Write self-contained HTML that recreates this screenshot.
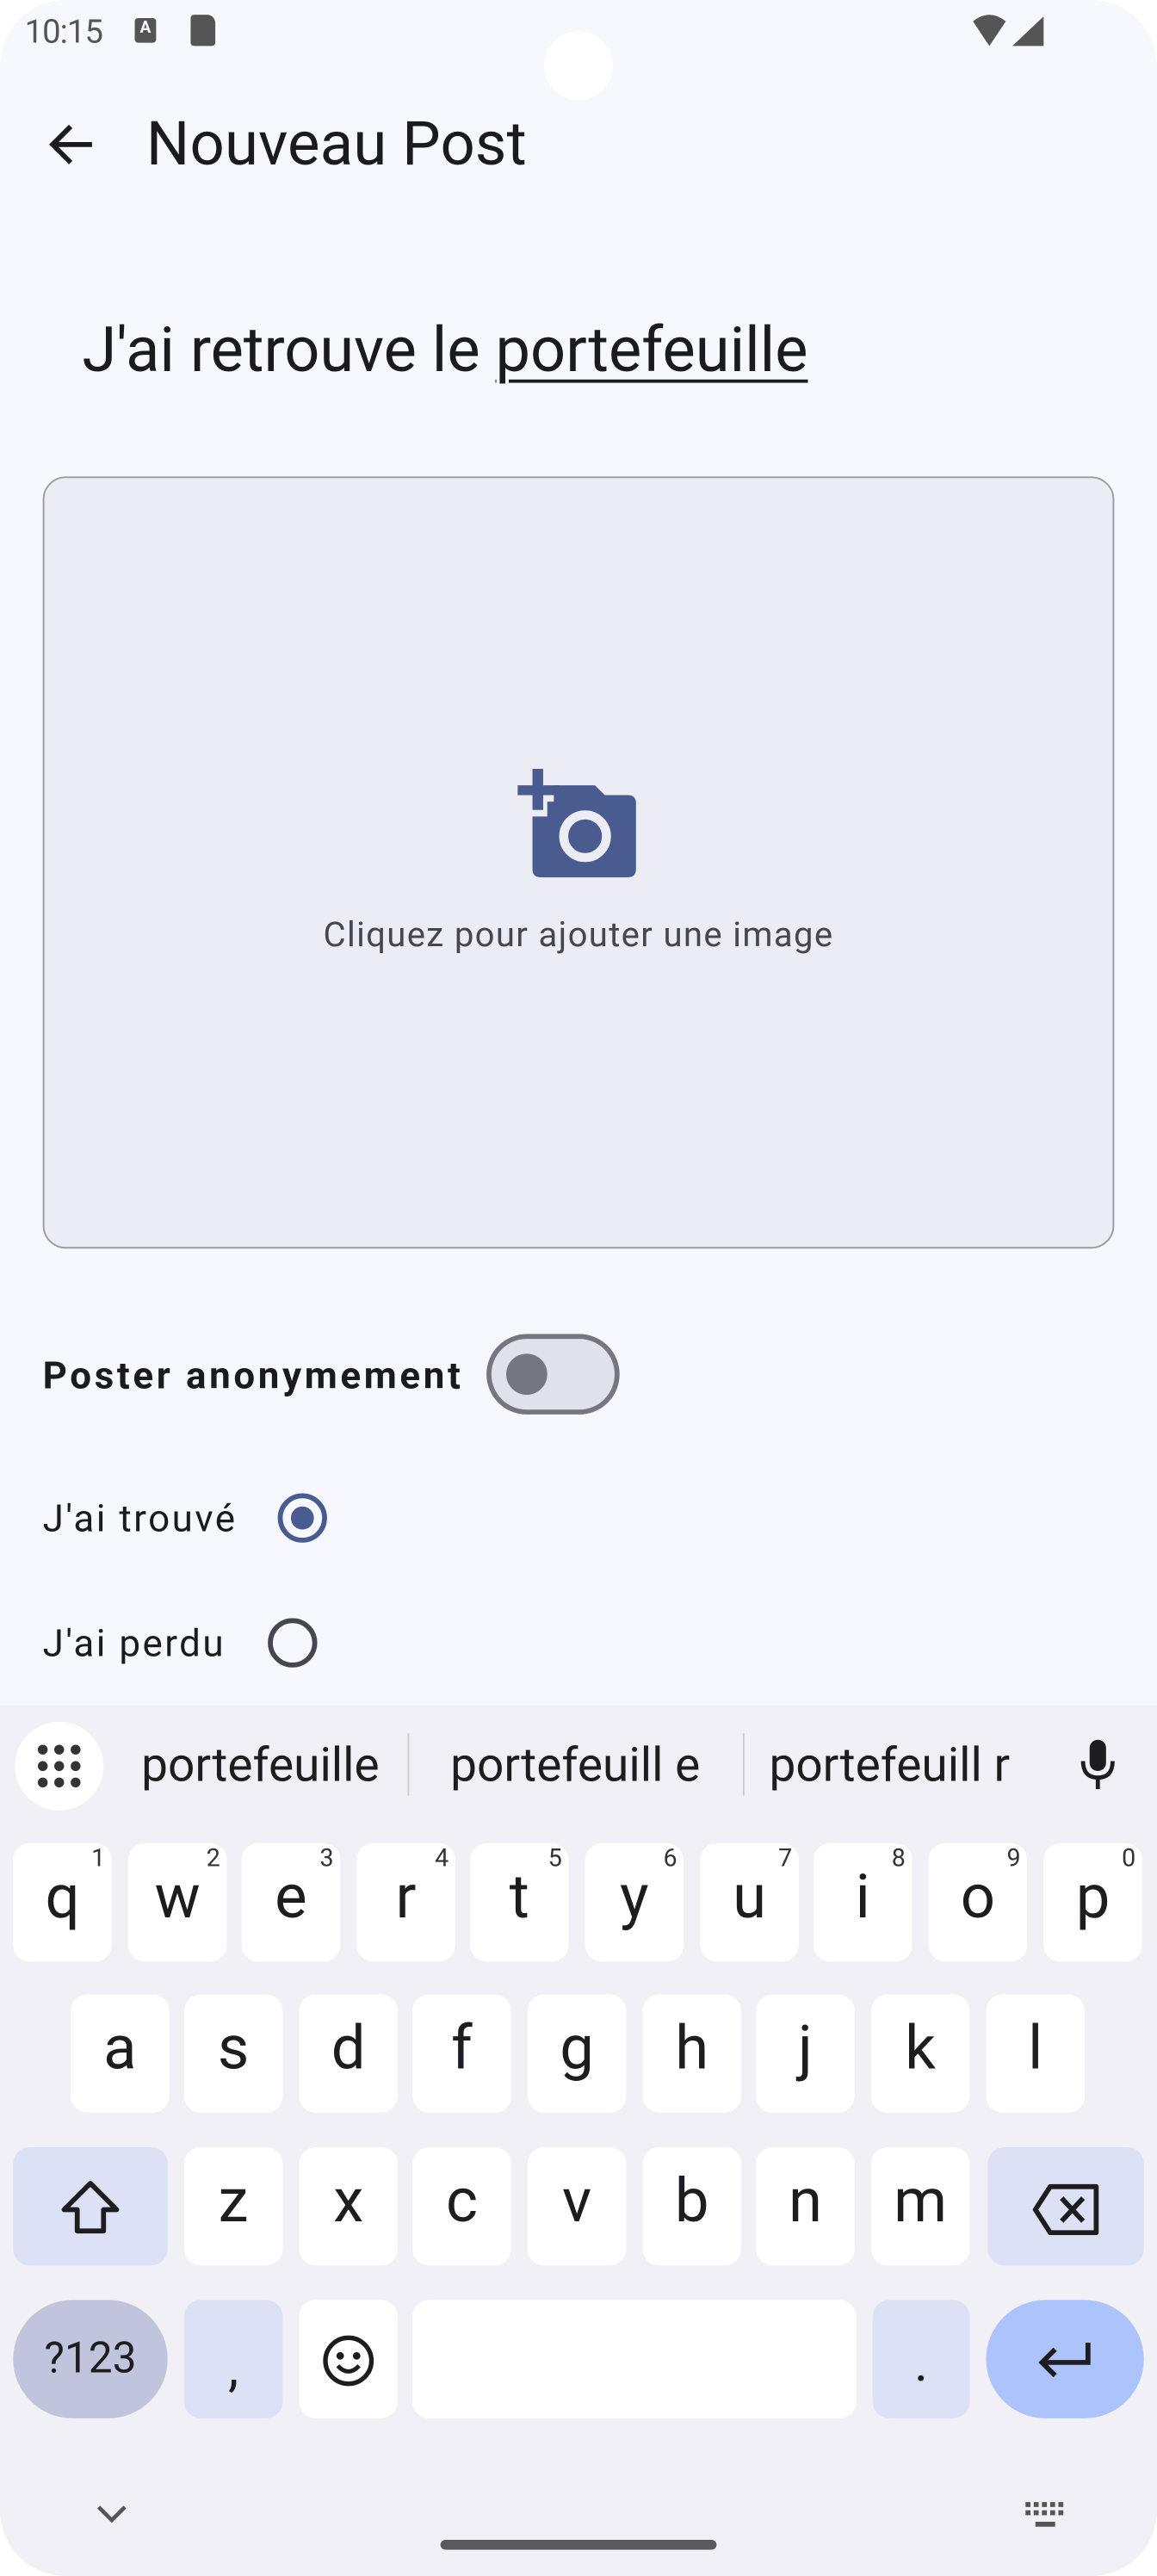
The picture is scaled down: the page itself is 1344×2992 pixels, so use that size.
<!DOCTYPE html>
<html><head><meta charset="utf-8">
<style>
html,body{margin:0;padding:0;background:#fff;}
body{width:1344px;height:2992px;overflow:hidden;}
#w{position:absolute;left:0;top:0;width:704px;height:1568px;transform:scale(1.909091,1.908163);transform-origin:0 0;background:#f7f8fd;border-radius:40px;overflow:hidden;font-family:"Roboto","Liberation Sans",sans-serif;}
.a{position:absolute;white-space:nowrap;}
.kb{position:absolute;left:0;top:1038px;width:704px;height:530px;background:#f1f0f6;}
.k{position:absolute;width:60px;height:72px;background:#fff;border-radius:10px;font-size:37px;color:#1d1d1f;text-align:center;line-height:68px;}
.k sup{position:absolute;right:4px;top:2px;font-size:15px;line-height:15px;color:#333;}
</style></head><body><div id="w">
<div class="a" style="left:15px;top:7px;font-size:20px;color:#555;letter-spacing:-0.5px">10:15</div>
<div class="a" style="left:82px;top:11px;width:13px;height:15px;background:#555;border-radius:2px;color:#fff;font-size:10px;text-align:center;line-height:14px;font-weight:bold">A</div>
<div class="a" style="left:116px;top:9px;width:15px;height:19px;background:#555;border-radius:2px 5px 2px 2px"></div>
<svg class="a" style="left:590px;top:9px" width="48" height="20"><path d="M2 4 Q12 -4 22 4 L12 19Z" fill="#555"/><path d="M26 19 L45 1 L45 19Z" fill="#555"/></svg>
<div class="a" style="left:331px;top:19px;width:42px;height:42px;border-radius:50%;background:#fff"></div>

<svg class="a" style="left:28px;top:74px" width="32" height="28"><path d="M28 14H4M15 3L4 14L15 25" stroke="#1b1b1f" stroke-width="3" fill="none"/></svg>
<div class="a" style="left:89px;top:67px;font-size:37px;color:#1b1b1f;letter-spacing:0.1px">Nouveau Post</div>
<div class="a" style="left:50px;top:192px;font-size:37.8px;color:#1b1b1f">J'ai retrouve le <span style="text-decoration:underline;text-underline-offset:5px;text-decoration-thickness:2px">portefeuille</span></div>

<div class="a" style="left:26px;top:290px;width:650px;height:468px;border:1px solid #9a9ca3;border-radius:14px;background:#ecedf4"></div>
<svg class="a" style="left:310px;top:464px" width="84" height="76" viewBox="310 464 84 76">
<rect x="315" y="478" width="25" height="6" fill="#4a5b8f"/><rect x="324" y="468" width="6.5" height="25" fill="#4a5b8f"/>
<path d="M337 478 H362 L368 484 H382 Q387 484 387 489 V529 Q387 534 382 534 H329 Q324 534 324 529 V497 H333 V488 H337Z" fill="#4a5b8f"/>
<circle cx="356" cy="509" r="13" fill="none" stroke="#ecedf4" stroke-width="5.5"/>
</svg>
<div class="a" style="left:0;width:704px;text-align:center;top:558px;font-size:21px;letter-spacing:0.7px;color:#45464f">Cliquez pour ajouter une image</div>

<div class="a" style="left:26px;top:824px;font-size:23px;letter-spacing:1.9px;font-weight:bold;color:#1b1b1f">Poster anonymement</div>
<div class="a" style="left:296px;top:812px;border:3px solid #74777f;border-radius:26px;background:#e0e2ea;width:75px;height:43px"></div>
<div class="a" style="left:308px;top:824px;width:25px;height:25px;border-radius:50%;background:#74777f"></div>

<div class="a" style="left:26px;top:911px;font-size:23px;letter-spacing:1.3px;color:#1b1b1f">J'ai trouvé</div>
<div class="a" style="left:169px;top:909px;width:24px;height:24px;border:3px solid #4a5b8f;border-radius:50%"></div>
<div class="a" style="left:177px;top:917px;width:14px;height:14px;border-radius:50%;background:#4a5b8f"></div>
<div class="a" style="left:26px;top:987px;font-size:23px;letter-spacing:1.3px;color:#1b1b1f">J'ai perdu</div>
<div class="a" style="left:163px;top:985px;width:24px;height:24px;border:3px solid #45464f;border-radius:50%"></div>

<div class="kb">
<div class="a" style="left:9px;top:10px;width:54px;height:54px;border-radius:50%;background:#fff"></div>
<svg class="a" style="left:22px;top:23px" width="28" height="28"><g fill="#333"><circle cx="4" cy="4" r="3"/><circle cx="14" cy="4" r="3"/><circle cx="24" cy="4" r="3"/><circle cx="4" cy="14" r="3"/><circle cx="14" cy="14" r="3"/><circle cx="24" cy="14" r="3"/><circle cx="4" cy="24" r="3"/><circle cx="14" cy="24" r="3"/><circle cx="24" cy="24" r="3"/></g></svg>
<div class="a" style="left:86px;top:20px;font-size:28.8px;color:#1d1d1f">portefeuille</div>
<div class="a" style="left:248px;top:17px;width:1px;height:38px;background:#ccc"></div>
<div class="a" style="left:274px;top:20px;font-size:28.8px;color:#1d1d1f">portefeuill e</div>
<div class="a" style="left:452px;top:17px;width:1px;height:38px;background:#ccc"></div>
<div class="a" style="left:468px;top:20px;font-size:28.8px;color:#1d1d1f">portefeuill r</div>
<svg class="a" style="left:656px;top:20px" width="24" height="32"><rect x="7" y="1" width="10" height="19" rx="5" fill="#1d1d1f"/><path d="M3 14 Q3 24 12 24 Q21 24 21 14 M12 24V31" stroke="#1d1d1f" stroke-width="2.5" fill="none"/></svg>
</div>

<div class="k" style="left:8px;top:1122px">q<sup>1</sup></div>
<div class="k" style="left:78px;top:1122px">w<sup>2</sup></div>
<div class="k" style="left:147px;top:1122px">e<sup>3</sup></div>
<div class="k" style="left:217px;top:1122px">r<sup>4</sup></div>
<div class="k" style="left:286px;top:1122px">t<sup>5</sup></div>
<div class="k" style="left:356px;top:1122px">y<sup>6</sup></div>
<div class="k" style="left:426px;top:1122px">u<sup>7</sup></div>
<div class="k" style="left:495px;top:1122px">i<sup>8</sup></div>
<div class="k" style="left:565px;top:1122px">o<sup>9</sup></div>
<div class="k" style="left:635px;top:1122px">p<sup>0</sup></div>

<div class="k" style="left:43px;top:1214px">a</div>
<div class="k" style="left:112px;top:1214px">s</div>
<div class="k" style="left:182px;top:1214px">d</div>
<div class="k" style="left:251px;top:1214px">f</div>
<div class="k" style="left:321px;top:1214px">g</div>
<div class="k" style="left:391px;top:1214px">h</div>
<div class="k" style="left:460px;top:1214px">j</div>
<div class="k" style="left:530px;top:1214px">k</div>
<div class="k" style="left:600px;top:1214px">l</div>

<div class="k" style="left:8px;top:1307px;width:94px;background:#dde1f6"></div>
<svg class="a" style="left:36px;top:1326px" width="38" height="36"><path d="M19 3 L35 19 H27 V32 H11 V19 H3Z" fill="none" stroke="#1d1d1f" stroke-width="3" stroke-linejoin="round"/></svg>
<div class="k" style="left:112px;top:1307px">z</div>
<div class="k" style="left:182px;top:1307px">x</div>
<div class="k" style="left:251px;top:1307px">c</div>
<div class="k" style="left:321px;top:1307px">v</div>
<div class="k" style="left:391px;top:1307px">b</div>
<div class="k" style="left:460px;top:1307px">n</div>
<div class="k" style="left:530px;top:1307px">m</div>
<div class="k" style="left:601px;top:1307px;width:95px;background:#dde1f6"></div>
<svg class="a" style="left:627px;top:1328px" width="44" height="34"><path d="M12 3 H40 V31 H12 L3 17Z" fill="none" stroke="#1d1d1f" stroke-width="3" stroke-linejoin="round"/><path d="M19 10 L32 24 M32 10 L19 24" stroke="#1d1d1f" stroke-width="3"/></svg>

<div class="k" style="left:8px;top:1400px;width:94px;border-radius:37px;background:#c0c5dd;font-size:26px;line-height:72px">?123</div>
<div class="k" style="left:112px;top:1400px;background:#dde1f6;font-size:32px;line-height:82px">,</div>
<div class="k" style="left:182px;top:1400px"></div>
<svg class="a" style="left:195px;top:1420px" width="34" height="34"><circle cx="17" cy="17" r="14" fill="none" stroke="#1d1d1f" stroke-width="2.8"/><circle cx="12" cy="14" r="2.3" fill="#1d1d1f"/><circle cx="22" cy="14" r="2.3" fill="#1d1d1f"/><path d="M10.5 20 Q17 27 23.5 20" fill="none" stroke="#1d1d1f" stroke-width="2.6"/></svg>
<div class="k" style="left:251px;top:1400px;width:270px"></div>
<div class="k" style="left:531px;top:1400px;width:59px;background:#dde1f6;font-size:32px;line-height:76px">.</div>
<div class="k" style="left:600px;top:1400px;width:96px;border-radius:37px;background:#adc3fb"></div>
<svg class="a" style="left:630px;top:1424px" width="36" height="26"><path d="M32 2 V14 H4 M12 6 L4 14 L12 22" fill="none" stroke="#1d1d1f" stroke-width="3"/></svg>

<svg class="a" style="left:58px;top:1523px" width="20" height="14"><path d="M2 3 L10 11 L18 3" fill="none" stroke="#555" stroke-width="2.4"/></svg>
<svg class="a" style="left:622px;top:1521px" width="30" height="20"><g fill="#555"><rect x="2" y="2" width="3" height="3"/><rect x="7" y="2" width="3" height="3"/><rect x="12" y="2" width="3" height="3"/><rect x="17" y="2" width="3" height="3"/><rect x="22" y="2" width="3" height="3"/><rect x="2" y="7" width="3" height="3"/><rect x="7" y="7" width="3" height="3"/><rect x="12" y="7" width="3" height="3"/><rect x="17" y="7" width="3" height="3"/><rect x="22" y="7" width="3" height="3"/><rect x="8" y="14" width="12" height="3"/></g></svg>
<div class="a" style="left:268px;top:1546px;width:168px;height:6px;border-radius:3px;background:#5a5a5e"></div>
</div></body></html>
